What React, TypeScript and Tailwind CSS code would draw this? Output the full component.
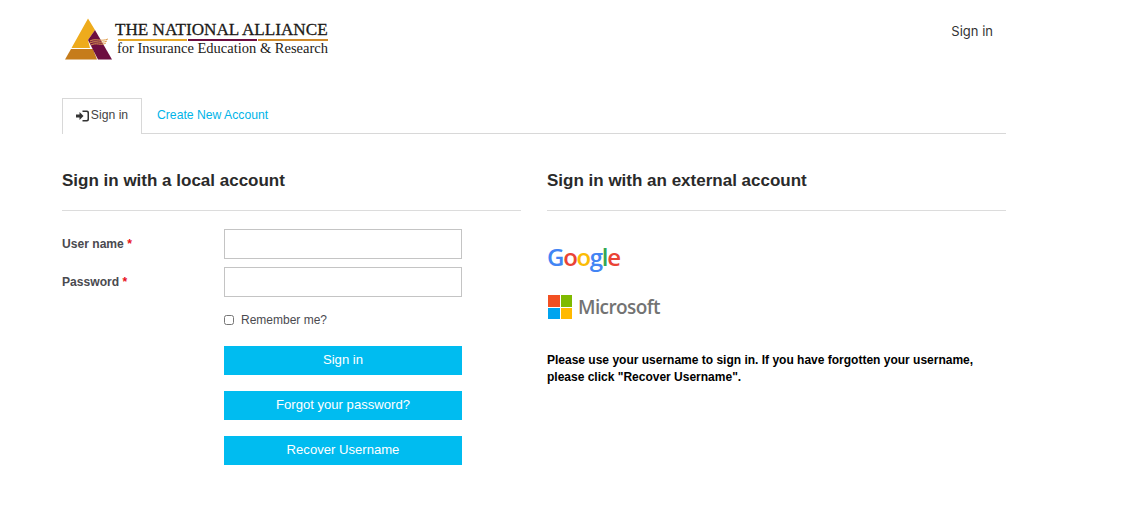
const sans = "font-['Liberation_Sans',Arial,sans-serif]";

function Logo() {
  return (
    <div className="flex items-start">
      <svg width="53" height="44" viewBox="0 0 53 44" className="mt-[18px] shrink-0">
        {/* gold left side */}
        <polygon points="26,0.500 33,12 26,22 28,30 9.500,30" fill="#eeab1c" />
        {/* lower band */}
        <polygon points="9,31 31,31 35,41.500 3,41.500" fill="#c67c1b" />
        {/* maroon side */}
        <polygon points="33,12 50,41.500 36,41.500 26,22" fill="#6d0e40" />
        {/* swoosh lines */}
        <path d="M28 23 C33 20 39 24 46 21" stroke="#e0a050" strokeWidth="1" fill="none" />
        <path d="M28 25 C33 22 39 26 45 23" stroke="#e0a050" strokeWidth="1" fill="none" />
        <path d="M29 27 C34 24 39 28 44 25" stroke="#e0a050" strokeWidth="1" fill="none" />
      </svg>
      <div className="mt-[20px] font-['Liberation_Serif','Times_New_Roman',serif] text-[#1c1a17]">
        <div className="text-[17.150px] leading-[19px] whitespace-nowrap [-webkit-text-stroke:0.3px_#1c1a17]">THE NATIONAL ALLIANCE</div>
        <div className="ml-[3px] flex h-[2px] gap-[1px]">
          <div className="w-[69px] bg-[#e5a829]" />
          <div className="w-[69px] bg-[#6d0e40]" />
          <div className="w-[70px] bg-[#cf8a2b]" />
        </div>
        <div className="mt-[-1px] ml-[2px] text-[14.500px] leading-[16px] whitespace-nowrap">for Insurance Education &amp; Research</div>
      </div>
    </div>
  );
}

function SignInGlyph() {
  return (
    <svg width="13" height="12" viewBox="0 0 13 12" className="mr-[2px] shrink-0 text-[#333]" fill="currentColor">
      <path d="M0 4.500h3.500V2l4 4-4 4V7.500H0z" />
      <path d="M6.500 0.500H11a2 2 0 0 1 2 2v7a2 2 0 0 1-2 2H6.500V10H10.500a1 1 0 0 0 1-1V3a1 1 0 0 0-1-1H6.500z" />
    </svg>
  );
}

function Field({ label }: { label: string }) {
  return (
    <div className="flex items-start">
      <label className="w-[162px] pt-[7px] text-[12.100px] leading-[16px] font-bold text-[#4a4a4f]">
        {label} <span className="text-[#e8101a]">*</span>
      </label>
      <input type="text" className="h-[30px] w-[238px] border border-[#c4c4c4] bg-white" />
    </div>
  );
}

function ActionButton({ children }: { children: string }) {
  return (
    <button className="h-[29px] w-[238px] bg-[#00bcf0] pb-[1px] text-[13.100px] text-white">{children}</button>
  );
}

function GoogleMark() {
  return (
    <div className="ml-[-1px] font-['Open_Sans',sans-serif] text-[24px] leading-[28px] font-semibold tracking-[-1.300px]">
      <span className="text-[#4285f4]">G</span>
      <span className="text-[#ea4335]">o</span>
      <span className="text-[#fbbc05]">o</span>
      <span className="text-[#4285f4]">g</span>
      <span className="text-[#34a853]">l</span>
      <span className="text-[#ea4335]">e</span>
    </div>
  );
}

function MicrosoftMark() {
  return (
    <div className="flex items-center">
      <div className="grid h-[24px] w-[24px] grid-cols-2 gap-[1px]">
        <div className="bg-[#f25022]" />
        <div className="bg-[#7fba00]" />
        <div className="bg-[#00a4ef]" />
        <div className="bg-[#ffb900]" />
      </div>
      <span className="ml-[6px] font-['Open_Sans',sans-serif] text-[19px] leading-[24px] font-semibold tracking-[-0.600px] text-[#737373]">
        Microsoft
      </span>
    </div>
  );
}

export default function App() {
  return (
    <div className={`${sans} h-[526px] w-[1133px] overflow-hidden bg-white pl-[62px]`}>
      <div className="w-[944px]">
        {/* Header */}
        <header className="flex h-[98px] items-start justify-between">
          <Logo />
          <a className="mt-[22px] mr-[13px] font-['Inter',sans-serif] text-[13px] leading-[18px] text-[#333]">Sign in</a>
        </header>

        {/* Tabs */}
        <div className="flex h-[36px] border-b border-[#d8d8d8] text-[12.200px]">
          <div className="flex h-[36px] w-[80px] items-center justify-center border border-b-0 border-[#d8d8d8] bg-white pb-[2px] text-[#444]">
            <SignInGlyph />
            Sign in
          </div>
          <a className="ml-[15px] flex items-center pb-[1px] text-[#00b4e8]">Create New Account</a>
        </div>

        <div className="mt-[36px] flex gap-[26px]">
          {/* Local account */}
          <section className="w-[459px]">
            <h2 className="border-b border-[#dcdcdc] pt-[1px] pb-[19px] text-[17px] leading-[20px] font-bold text-[#2a2a2a]">
              Sign in with a local account
            </h2>
            <div className="mt-[18px] flex flex-col gap-[8px]">
              <Field label="User name" />
              <Field label="Password" />
            </div>
            <div className="mt-[15px] ml-[162px] flex items-center">
              <input type="checkbox" className="h-[10px] w-[10px]" />
              <span className="ml-[7px] text-[12px] leading-[16px] text-[#4a4a4f]">Remember me?</span>
            </div>
            <div className="mt-[18px] ml-[162px] flex flex-col gap-[16px]">
              <ActionButton>Sign in</ActionButton>
              <ActionButton>Forgot your password?</ActionButton>
              <ActionButton>Recover Username</ActionButton>
            </div>
          </section>

          {/* External account */}
          <section className="w-[459px]">
            <h2 className="border-b border-[#dcdcdc] pt-[1px] pb-[19px] text-[17px] leading-[20px] font-bold text-[#2a2a2a]">
              Sign in with an external account
            </h2>
            <div className="mt-[32px] ml-[1px]">
              <GoogleMark />
              <div className="mt-[24px]">
                <MicrosoftMark />
              </div>
            </div>
            <p className="mt-[33px] text-[12px] leading-[17px] font-bold text-black">
              Please use your username to sign in. If you have forgotten your username,
              <br />
              please click "Recover Username".
            </p>
          </section>
        </div>
      </div>
    </div>
  );
}
